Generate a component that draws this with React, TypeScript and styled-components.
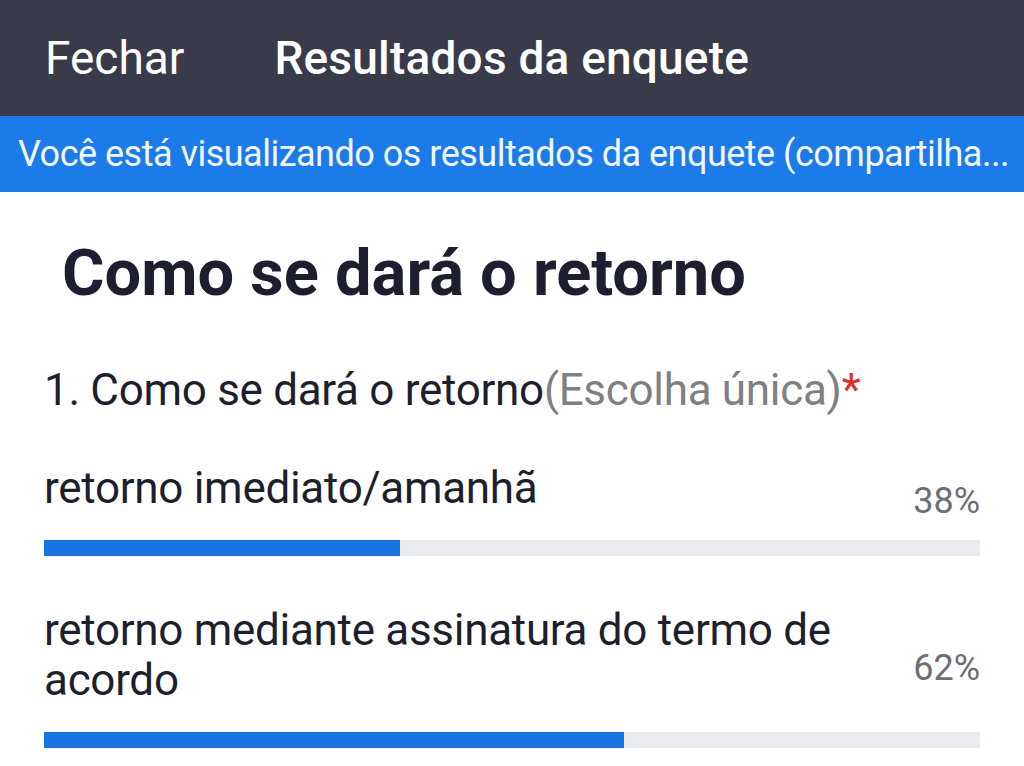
import styled, { createGlobalStyle } from "styled-components";

interface Option {
  id: number;
  label: string;
  percent: number;
}

const options: Option[] = [
  { id: 1, label: "retorno imediato/amanhã", percent: 38 },
  { id: 2, label: "retorno mediante assinatura do termo de acordo", percent: 62 },
];

const GlobalStyle = createGlobalStyle`
  html, body {
    margin: 0;
    padding: 0;
    background: #ffffff;
    font-family: Roboto, "Liberation Sans", Arial, sans-serif;
  }
`;

const Page = styled.div`
  width: 1024px;
  height: 766px;
  overflow: hidden;
  background: #ffffff;
`;

const TopBar = styled.header`
  height: 116px;
  background: #393a4a;
  display: flex;
  align-items: center;
  padding: 0 45px;
  gap: 90px;
  color: #ffffff;
  font-size: 46px;
`;

const CloseButton = styled.span`
  font-weight: 400;
`;

const BarTitle = styled.span`
  font-weight: 500;
  letter-spacing: 0.2px;
`;

const Banner = styled.div`
  height: 76px;
  background: #1a7be9;
  color: #f2f7ff;
  display: flex;
  align-items: center;
  padding: 0 18px;
  font-size: 36px;
  white-space: nowrap;
  overflow: hidden;
  letter-spacing: -0.5px;
`;

const Content = styled.main`
  padding: 0 44px;
`;

const PollTitle = styled.h1`
  margin: 45px 0 0 18px;
  font-size: 65px;
  font-weight: 700;
  color: #1e1f2e;
  line-height: 72px;
`;

const Question = styled.div`
  margin-top: 53px;
  font-size: 44px;
  line-height: 56px;
  color: #1e1f2e;
  letter-spacing: -0.3px;
`;

const Hint = styled.span`
  color: #7f7f84;
`;

const Required = styled.span`
  color: #d9302c;
`;

const OptionBlock = styled.div`
  margin-top: 45px;
  & + & {
    margin-top: 49px;
  }
`;

const OptionRow = styled.div`
  display: flex;
  align-items: center;
  gap: 20px;
`;

const OptionLabel = styled.div`
  flex: 1;
  font-size: 44px;
  line-height: 50px;
  color: #1e1f2e;
  letter-spacing: -0.3px;
`;

const Percent = styled.div`
  font-size: 36px;
  line-height: 42px;
  color: #6e6f76;
  margin: 13px 0 -13px;
`;

const Track = styled.div`
  margin-top: 27px;
  height: 16px;
  background: #ebecf0;
`;

const Fill = styled.div`
  height: 100%;
  background: #1a73e3;
`;

export default function App() {
  return (
    <Page>
      <GlobalStyle />
      <TopBar>
        <CloseButton>Fechar</CloseButton>
        <BarTitle>Resultados da enquete</BarTitle>
      </TopBar>
      <Banner>Você está visualizando os resultados da enquete (compartilha...</Banner>
      <Content>
        <PollTitle>Como se dará o retorno</PollTitle>
        <Question>
          1. Como se dará o retorno<Hint>(Escolha única)</Hint>
          <Required>*</Required>
        </Question>
        {options.map((o) => (
          <OptionBlock key={o.id}>
            <OptionRow>
              <OptionLabel>{o.label}</OptionLabel>
              <Percent>{o.percent}%</Percent>
            </OptionRow>
            <Track>
              <Fill style={{ width: `${o.percent}%` }} />
            </Track>
          </OptionBlock>
        ))}
      </Content>
    </Page>
  );
}
